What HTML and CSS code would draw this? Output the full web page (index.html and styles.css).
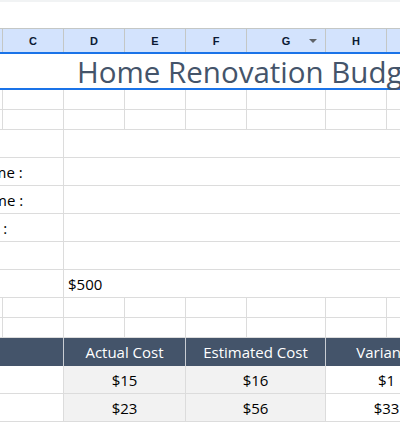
FILE: index.html
```html
<!DOCTYPE html>
<html lang="en">
<head>
<meta charset="utf-8">
<title>Home Renovation Budget</title>
<link rel="stylesheet" href="styles.css">
</head>
<body>
<div class="toolbar"></div>
<div class="spacer"></div>
<div class="sheet">
  <div class="row colhead">
    <div class="h">A</div><div class="h">B</div><div class="h">C</div><div class="h">D</div><div class="h">E</div><div class="h">F</div>
    <div class="h hg"><span></span><span>G</span><svg class="arrow" width="8" height="4" viewBox="0 0 8 4"><path d="M0 0H8L4 4Z" fill="#5f6368"/></svg></div>
    <div class="h">H</div><div class="h">I</div><div class="h"></div>
  </div>
  <div class="row title"><div class="tcell">Home Renovation Budget</div></div>
  <div class="row short"><div class="c"></div><div class="c"></div><div class="c"></div><div class="c"></div><div class="c"></div><div class="c"></div><div class="c"></div><div class="c"></div><div class="c"></div><div class="c"></div></div>
  <div class="row short"><div class="c"></div><div class="c"></div><div class="c"></div><div class="c"></div><div class="c"></div><div class="c"></div><div class="c"></div><div class="c"></div><div class="c"></div><div class="c"></div></div>
  <div class="row tall"><div class="c lab"></div><div class="c val"></div></div>
  <div class="row tall"><div class="c lab">Client Name :</div><div class="c val"></div></div>
  <div class="row tall"><div class="c lab">Agent Name :</div><div class="c val"></div></div>
  <div class="row tall"><div class="c lab">Start Date :</div><div class="c val"></div></div>
  <div class="row tall"><div class="c lab"></div><div class="c val"></div></div>
  <div class="row tall"><div class="c lab">Budget :</div><div class="c val">$500</div></div>
  <div class="row short"><div class="c"></div><div class="c"></div><div class="c"></div><div class="c"></div><div class="c"></div><div class="c"></div><div class="c"></div><div class="c"></div><div class="c"></div><div class="c"></div></div>
  <div class="row short"><div class="c"></div><div class="c"></div><div class="c"></div><div class="c"></div><div class="c"></div><div class="c"></div><div class="c"></div><div class="c"></div><div class="c"></div><div class="c"></div></div>
  <div class="row tall thead">
    <div class="th sAC">Item</div><div class="th sDE">Actual Cost</div><div class="th sFG">Estimated Cost</div><div class="th sHI">Variance</div><div class="th"></div>
  </div>
  <div class="row tall">
    <div class="c sAC"></div><div class="c sDE num shade">$15</div><div class="c sFG num shade">$16</div><div class="c sHI num">$1</div><div class="c"></div>
  </div>
  <div class="row tall">
    <div class="c sAC"></div><div class="c sDE num shade">$23</div><div class="c sFG num shade">$56</div><div class="c sHI num">$33</div><div class="c"></div>
  </div>
</div>
</body>
</html>
```
FILE: styles.css
```css
* { box-sizing: border-box; margin: 0; padding: 0; }
html, body { width: 400px; height: 423px; overflow: hidden; background: #fff; }
body { font-family: "Open Sans", "Liberation Sans", sans-serif; color: #000; }

.toolbar { height: 2px; background: #f1f3f4; }
.spacer { height: 26px; }

.sheet { margin-left: -200px; width: 660px; }
.row {
  display: grid;
  grid-template-columns: 100px 103px 61px 61px 61px 61px 79px 61px 61px 12px;
}
.short { height: 20px; }
.tall { height: 28px; }

.colhead {
  height: 24px;
  background: #d3e3fd;
  border-top: 1px solid #c4c7c5;
}
.h {
  border-right: 1px solid #c4c7c5;
  display: flex;
  align-items: center;
  justify-content: center;
  font-family: "Liberation Sans", Arial, sans-serif;
  font-weight: bold;
  font-size: 11px;
  color: #0b1a33;
}
.hg {
  display: grid;
  grid-template-columns: 1fr auto 1fr;
  align-items: center;
}
.hg .arrow { justify-self: end; margin-right: 8px; }

.title {
  height: 38px;
  display: block;
  border-top: 2px solid #1a73e8;
  border-bottom: 2px solid #1a73e8;
}
.tcell {
  height: 100%;
  display: flex;
  align-items: center;
  padding-left: 277px;
  font-size: 29.5px;
  color: #44546a;
  white-space: nowrap;
}

.c {
  border-right: 1px solid #dcdcdc;
  border-bottom: 1px solid #dcdcdc;
  display: flex;
  align-items: center;
  font-size: 15px;
  white-space: nowrap;
}
.lab { grid-column: 1 / 4; padding-left: 129px; }
.val { grid-column: 4 / 11; padding-left: 4px; border-right: none; }

.sAC { grid-column: 1 / 4; }
.sDE { grid-column: 4 / 6; }
.sFG { grid-column: 6 / 8; }
.sHI { grid-column: 8 / 10; }

.thead { background: #44546a; }
.th {
  border-right: 1px solid #c9cdd3;
  display: flex;
  align-items: center;
  justify-content: center;
  color: #fff;
  font-size: 15px;
  white-space: nowrap;
}
.thead .sAC { color: #44546a; }

.num { justify-content: center; }
.shade { background: #f2f2f2; }
```
